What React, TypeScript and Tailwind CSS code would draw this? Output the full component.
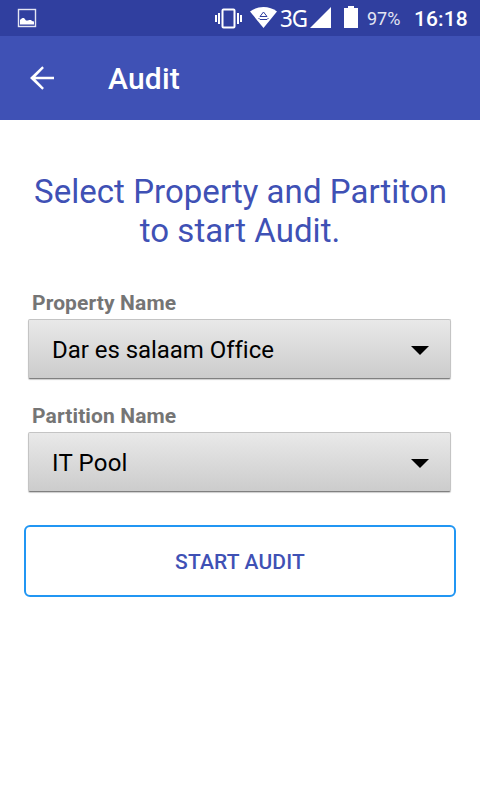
type SpinnerFieldProps = {
  label: string;
  value: string;
  valueClassName: string;
};

const StatusBar = () => (
  <div className="relative h-9 bg-[#303f9f] text-white">
    <svg className="block h-9 w-[480px]" viewBox="0 0 480 36" fill="none">
      {/* screenshot notification */}
      <rect x="18.5" y="9.5" width="17" height="17" stroke="#e4e6f3" strokeWidth="1.4" />
      <path d="M20 24.5V20l1-1 1.500-1H24l2 2.500h2l1-.5h2l1 1 2 .5v3z" fill="#fff" />
      {/* vibrate */}
      <rect x="222.500" y="9.500" width="12" height="18" rx="1" stroke="#fff" strokeWidth="2" />
      <path d="M219 13v11M238 13v11" stroke="#fff" strokeWidth="2" />
      <path d="M216 15v7M241 15v7" stroke="#fff" strokeWidth="2" />
      {/* wifi */}
      <path d="M250 11.500C257.500 5.500 269.500 5.500 277 11.500L263.500 28z" fill="#fff" />
      <path d="M260 16.500l3.500-4.500 3.500 4.500z" stroke="#303f9f" strokeWidth="1" />
      <path d="M258.500 18l1.500 1.500h7l1.500-1.500" stroke="#303f9f" strokeWidth="1" />
      {/* signal */}
      <path d="M331 7v21h-21z" fill="#fff" />
      {/* battery */}
      <path d="M344 8h4V6h6v2h4v20h-14z" fill="#fff" />
    </svg>
    <span className="absolute left-[280px] top-[3px] origin-left scale-x-95 font-['Noto_Sans',sans-serif] text-[23.5px] leading-[30px] tracking-[-1.2px]">
      3G
    </span>
    <span className="absolute left-[367px] top-[8px] text-[18px] leading-[22px] text-[#e4e6f3]">97%</span>
    <span className="absolute left-[414px] top-[6px] text-[21px] font-medium leading-[26px] tracking-[0.1px]">16:18</span>
  </div>
);

const AppBar = () => (
  <header className="flex h-[84px] items-center bg-[#3f51b5] pl-[24px] text-white">
    <svg className="h-9 w-9" viewBox="0 0 24 24" fill="currentColor">
      <path d="M20 11.100H7.600l5.700-5.700L12.200 4.100 4 12l8.200 7.900 1.100-1.250-5.700-5.750H20z" />
    </svg>
    <h1 className="ml-12 pt-[2px] text-[30px] font-medium leading-9 tracking-[0.2px]">Audit</h1>
  </header>
);

const SpinnerField = ({ label, value, valueClassName }: SpinnerFieldProps) => (
  <div className="h-[113px] pl-[28px] pr-[29px]">
    <div className="h-[29px] pl-1 pt-[1px] text-[21px] font-bold leading-[25px] tracking-[0.12px] text-[#757575]">
      {label}
    </div>
    <div className="flex h-[60px] items-center justify-between rounded-[2px] border border-[#c4c4c4] border-b-[#808080] bg-linear-to-b from-[#e9e9e9] to-[#cccccc] pl-[23px] pr-[21px] text-2xl text-black shadow-[0_1px_1px_rgba(0,0,0,0.2)]">
      <span className={`pt-[1px] [font-variant-ligatures:none] ${valueClassName}`}>{value}</span>
      <svg className="mt-[3px] h-[9px] w-[18px]" viewBox="0 0 18 9">
        <path d="M0 0h18L9 9z" />
      </svg>
    </div>
  </div>
);

const App = () => (
  <div className="h-[800px] w-[480px] overflow-hidden bg-white font-[Roboto,sans-serif]">
    <StatusBar />
    <AppBar />
    <main className="pt-[52px]">
      <h2 className="text-center text-[33px] leading-[39px] tracking-[0.04px] text-[#3f51b5]">
        <span className="pl-[1px]">Select Property and Partiton</span>
        <br />
        to start Audit.
      </h2>
      <div className="pt-[40px]">
        <SpinnerField label="Property Name" value="Dar es salaam Office" valueClassName="tracking-[-0.04px]" />
        <SpinnerField label="Partition Name" value="IT Pool" valueClassName="tracking-[0.2px]" />
      </div>
      <div className="px-6 pt-[9px]">
        <button className="h-[72px] w-full rounded-[6px] border-2 border-[#2196f3] pt-[3px] text-[21px] font-medium tracking-[0.15px] text-[#3f51b5]">
          START AUDIT
        </button>
      </div>
    </main>
  </div>
);

export default App;
